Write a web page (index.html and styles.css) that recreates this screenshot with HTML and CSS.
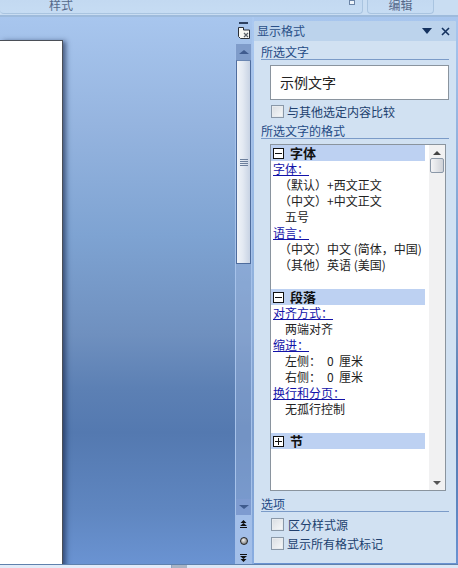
FILE: index.html
```html
<!DOCTYPE html>
<html lang="zh-CN">
<head>
<meta charset="utf-8">
<title>显示格式</title>
<link rel="stylesheet" href="styles.css">
</head>
<body>
<div class="app">
  <header class="ribbon">
    <div class="group group-style"><span class="group-label">样式</span><span class="launcher"></span></div>
    <div class="group group-edit"><span class="group-label">编辑</span></div>
  </header>
  <main class="main">
    <section class="canvas"><div class="page"></div></section>
    <aside class="vscroll">
      <div class="ruler-dash"></div>
      <svg class="ruler-icon" width="12" height="12" viewBox="0 0 12 12"><path d="M.5 .5h5v2.5h6v8.5h-9l-2-2z" fill="#f6f6f2" stroke="#2a2f38"/><path d="M6 6l4 4M10 6l-4 4" stroke="#5a6068" stroke-width="1.2" fill="none"/></svg>
      <div class="sb-btn sb-up"><span class="tri-up"></span></div>
      <div class="sb-thumb"><span class="grip"></span></div>
      <div class="sb-track"></div>
      <div class="sb-btn sb-down"><span class="tri-down"></span></div>
      <div class="nav-btn"><svg width="7" height="8" viewBox="0 0 7 8"><path d="M3.5 0L6.5 3H.5zM3.5 3L7 6H0z" fill="#111"/><path d="M0 7.5h7" stroke="#111"/></svg></div>
      <div class="nav-btn"><span class="nav-dot"></span></div>
      <div class="nav-btn"><svg width="7" height="8" viewBox="0 0 7 8"><path d="M0 .5h7" stroke="#111"/><path d="M0 2h7L3.5 5zM.5 5h6L3.5 8z" fill="#111"/></svg></div>
    </aside>
    <aside class="pane">
      <div class="pane-title">
        <span class="pane-name">显示格式</span>
        <span class="pane-menu"></span>
        <svg class="pane-close" width="9" height="9" viewBox="0 0 9 9"><path d="M1 1l7 7M8 1L1 8" stroke="#15325f" stroke-width="1.6"/></svg>
      </div>
      <h2 class="sec-head">所选文字</h2>
      <div class="sample">示例文字</div>
      <label class="check check-compare"><span class="box"></span>与其他选定内容比较</label>
      <h2 class="sec-head sec-format">所选文字的格式</h2>
      <div class="list">
        <div class="list-body">
          <div class="band"><span class="toggle minus"></span><b>字体</b></div>
          <div class="row"><a class="lnk">字体：</a></div>
          <div class="row paren">（默认）+西文正文</div>
          <div class="row paren">（中文）+中文正文</div>
          <div class="row val">五号</div>
          <div class="row"><a class="lnk">语言：</a></div>
          <div class="row paren">（中文）中文 (简体，中国)</div>
          <div class="row paren">（其他）英语 (美国)</div>
          <div class="row"></div>
          <div class="band"><span class="toggle minus"></span><b>段落</b></div>
          <div class="row"><a class="lnk">对齐方式：</a></div>
          <div class="row val">两端对齐</div>
          <div class="row"><a class="lnk">缩进：</a></div>
          <div class="row val"><span class="key">左侧：</span><span class="num">0</span>厘米</div>
          <div class="row val"><span class="key">右侧：</span><span class="num">0</span>厘米</div>
          <div class="row"><a class="lnk">换行和分页：</a></div>
          <div class="row val">无孤行控制</div>
          <div class="row"></div>
          <div class="band"><span class="toggle plus"></span><b>节</b></div>
        </div>
        <div class="list-scroll">
          <span class="mini-up"></span>
          <span class="mini-thumb"></span>
          <span class="mini-down"></span>
        </div>
      </div>
      <h2 class="sec-head sec-options">选项</h2>
      <label class="check check-opt"><span class="box"></span><span class="opt-text">区分样式源</span></label>
      <label class="check check-opt"><span class="box"></span>显示所有格式标记</label>
    </aside>
  </main>
  <footer class="status">
    <div class="status-left"></div>
    <div class="status-thumb"></div>
    <div class="status-right"></div>
  </footer>
</div>
</body>
</html>
```
FILE: styles.css
```css
* { box-sizing: border-box; }
html, body { margin: 0; padding: 0; }
body {
  width: 458px;
  height: 568px;
  overflow: hidden;
  font-family: "Noto Sans CJK SC", "Liberation Sans", sans-serif;
  font-size: 12px;
  color: #1a1a1a;
}
.app { display: flex; flex-direction: column; height: 568px; }

.ribbon {
  height: 17px;
  display: flex;
  gap: 4px;
  padding-right: 24px;
  background: #c9ddf2;
  border-bottom: 2px solid #9ebbdc;
  flex: none;
}
.group {
  height: 14px;
  position: relative;
  display: flex;
  justify-content: center;
  align-items: flex-end;
  background: linear-gradient(#c3d9f1, #c6dcf3);
  border: 1px solid #a9c4e0;
  border-top: 0;
  border-radius: 0 0 4px 4px;
  overflow: hidden;
}
.group-style { width: 363px; border-left: 0; padding-right: 240px; }
.group-edit { width: 67px; }
.group-label { line-height: 14px; color: #55698a; font-size: 12px; position: relative; top: -1px; }
.launcher {
  position: absolute;
  right: 7px;
  bottom: 8px;
  width: 6px;
  height: 5px;
  border: 1px solid #6b84a6;
  background: #eef4fa;
}

.main {
  flex: 1;
  min-height: 0;
  display: flex;
  background: linear-gradient(#a8c6ee 0%, #95b4df 20%, #7ea3d2 40%, #6f90bf 58%, #5c80b4 68%, #5479b0 76%, #5f86c0 90%, #6a93d2 100%);
}
.canvas { width: 235px; padding-top: 23px; flex: none; overflow: hidden; }
.page {
  width: 63px;
  height: 530px;
  background: #fff;
  border-top: 1px solid #4b4f57;
  border-right: 1px solid #4b4f57;
  box-shadow: 3px 1px 5px rgba(25, 40, 75, .65);
}

.vscroll {
  width: 19px;
  flex: none;
  display: flex;
  flex-direction: column;
  align-items: center;
  padding: 5px 2px 0 0;
  background: linear-gradient(90deg, transparent 0 17px, rgba(175, 205, 245, .45) 17px);
}
.ruler-dash { width: 9px; height: 2px; background: #2c4060; flex: none; }
.ruler-icon { margin-top: 3px; flex: none; }
.sb-btn {
  width: 17px;
  height: 16px;
  flex: none;
  display: flex;
  align-items: center;
  justify-content: center;
  background: #7f9cca;
  border-left: 1px solid #a6c2ea;
  border-right: 1px solid #a6c2ea;
}
.sb-up { margin-top: 5px; }
.tri-up, .tri-down { width: 0; height: 0; border-left: 5px solid transparent; border-right: 5px solid transparent; }
.tri-up { border-bottom: 4px solid #3f5b8e; }
.tri-down { border-top: 4px solid #3f5b8e; }
.sb-thumb {
  width: 15px;
  height: 204px;
  flex: none;
  display: flex;
  align-items: center;
  justify-content: center;
  background: linear-gradient(90deg, #f0f3f8, #e3e9f2 45%, #c8d3e4);
  border: 1px solid #4e6c9d;
  border-top: 1px solid #6a86b2;
  box-shadow: -1px 0 #a6c2ea, 1px 0 #a6c2ea;
}
.grip {
  width: 8px;
  height: 7px;
  background: repeating-linear-gradient(#6c7f9c 0 1px, transparent 1px 2px);
}
.sb-track {
  width: 17px;
  flex: none;
  height: 235px;
  background: rgba(165, 190, 230, .38);
  border-left: 1px solid #a6c2ea;
  border-right: 1px solid #a6c2ea;
}
.sb-down { background: #7e9bd0; }
.nav-btn {
  width: 17px;
  height: 17px;
  flex: none;
  display: flex;
  align-items: center;
  justify-content: center;
  background: #a3bfe9;
}
.nav-dot {
  width: 8px;
  height: 8px;
  border-radius: 50%;
  background: radial-gradient(circle at 40% 35%, #f2f2f2, #8a8a8a 70%);
  border: 1px solid #222;
}

.pane {
  width: 202px;
  height: 542px;
  margin-top: 4px;
  flex: none;
  background: #d1e1f2;
  border-radius: 2px 2px 0 0;
  overflow: hidden;
}
.pane-title {
  height: 20px;
  display: flex;
  align-items: center;
  padding: 0 6px 0 3px;
  background: #bcd3ec;
}
.pane-name { color: #2a5088; line-height: 20px; flex: 1; }
.pane-menu {
  width: 0;
  height: 0;
  border-left: 5px solid transparent;
  border-right: 5px solid transparent;
  border-top: 6px solid #15325f;
  margin-right: 9px;
}
.sec-head {
  margin: 3px 0 0 7px;
  width: 188px;
  height: 16px;
  font-size: 12px;
  font-weight: 400;
  line-height: 15px;
  color: #1f4a85;
  border-bottom: 1px solid #7b9bc8;
}
.sample {
  margin: 5px 0 0 16px;
  width: 179px;
  height: 35px;
  padding-left: 9px;
  background: #fff;
  border: 1px solid #8a949e;
  font-size: 14px;
  line-height: 32px;
  color: #222;
}
.check {
  display: flex;
  align-items: center;
  gap: 3px;
  margin-left: 17px;
  height: 13px;
  line-height: 13px;
  color: #20406e;
}
.check-compare { margin-top: 5px; }
.box {
  width: 13px;
  height: 13px;
  flex: none;
  background: linear-gradient(135deg, #d9dde2, #f8f9fa);
  border: 1px solid #8a98a8;
  box-shadow: inset 0 0 0 1px #e8ebee;
}
.sec-format { margin-top: 5px; }
.list {
  margin: 5px 0 0 16px;
  width: 176px;
  height: 347px;
  display: flex;
  background: #fff;
  border: 1px solid #8a949e;
}
.list-body { width: 154px; flex: none; }
.row {
  height: 16px;
  line-height: 16px;
  padding-left: 2px;
  white-space: nowrap;
  color: #222;
}
.row.paren { padding-left: 8px; }
.row.val { padding-left: 14px; display: flex; }
.key { width: 42px; flex: none; }
.num { width: 12px; flex: none; }
.lnk { display: inline-block; height: 16px; line-height: 16px; vertical-align: top; color: #1212a8; text-decoration: underline; }
.band {
  height: 16px;
  display: flex;
  align-items: center;
  gap: 6px;
  padding-left: 2px;
  background: #bdd1f2;
  color: #111;
  line-height: 16px;
}
.band b { display: block; height: 16px; overflow: visible; font-size: 13px; line-height: 16px; font-weight: 700; }
.toggle {
  position: relative;
  width: 11px;
  height: 11px;
  flex: none;
  border: 1px solid #111;
  background: #fff;
}
.toggle::before {
  content: "";
  position: absolute;
  left: 1px;
  right: 1px;
  top: 4px;
  height: 1px;
  background: #111;
}
.plus::after {
  content: "";
  position: absolute;
  top: 1px;
  bottom: 1px;
  left: 4px;
  width: 1px;
  background: #111;
}
.list-scroll {
  width: 16px;
  margin-left: 4px;
  flex: none;
  display: flex;
  flex-direction: column;
  align-items: center;
  background: #f1f1f2;
  padding-top: 6px;
}
.mini-up, .mini-down { width: 0; height: 0; border-left: 4px solid transparent; border-right: 4px solid transparent; flex: none; }
.mini-up { border-bottom: 4px solid #444; }
.mini-down { border-top: 4px solid #555; margin-top: auto; margin-bottom: 5px; }
.mini-thumb {
  width: 14px;
  height: 15px;
  margin-top: 3px;
  background: linear-gradient(90deg, #f4f4f6, #cfd2d8);
  border: 1px solid #8b98a8;
  border-radius: 2px;
}
.sec-options { margin-top: 5px; }
.check-opt { margin-top: 6px; }
.opt-text { padding-left: 1px; }

.status { height: 4px; flex: none; display: flex; border-top: 1px solid #5f81ad; background: #dce9f8; }
.status-left { width: 172px; background: #e2ecf9; border-right: 1px solid #8da5c4; }
.status-thumb { width: 15px; background: #a9b4c4; }
.status-right { flex: 1; background: #dbe8f6; }
```
